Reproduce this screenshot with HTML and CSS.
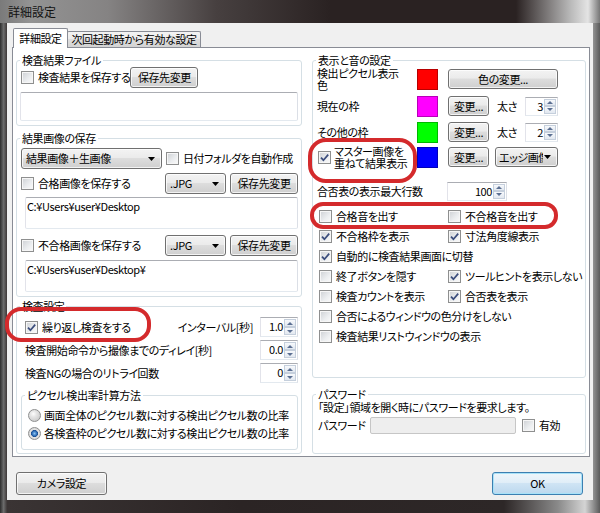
FILE: index.html
```html
<!DOCTYPE html>
<html lang="ja">
<head>
    <meta charset="UTF-8">
    <title>詳細設定</title>
    <link rel="stylesheet" href="styles.css">
</head>
<body>
<div class="window">
    <div class="titlebar">詳細設定</div>
    <div class="client">
        <div class="tabs">
            <div class="tab active">詳細設定</div>
            <div class="tab">次回起動時から有効な設定</div>
        </div>

        <div class="page">
            <!-- left column -->
            <div class="col left">
                <fieldset>
                    <legend>検査結果ファイル</legend>
                    <div class="row h21">
                        <label class="chk ml1"><span class="cb"></span>検査結果を保存する</label>
                        <span class="btn save">保存先変更</span>
                    </div>
                    <div class="tb file mt4"></div>
                </fieldset>

                <fieldset class="mt6">
                    <legend>結果画像の保存</legend>
                    <div class="row h21 mt3">
                        <span class="combo kind ml1"><span class="ctext">結果画像＋生画像</span><svg class="dd" viewBox="0 0 7 4"><path d="M0 0h7L3.5 4z"/></svg></span>
                        <label class="chk ml4"><span class="cb"></span>日付フォルダを自動作成</label>
                        <span class="grow"></span>
                    </div>
                    <div class="row h21 mt4">
                        <label class="chk ml1 grow"><span class="cb"></span>合格画像を保存する</label>
                        <span class="combo ext"><span class="ctext">.JPG</span><svg class="dd" viewBox="0 0 7 4"><path d="M0 0h7L3.5 4z"/></svg></span>
                        <span class="btn save ml4">保存先変更</span>
                    </div>
                    <div class="tb path mt3">C:¥Users¥user¥Desktop</div>
                    <div class="row h21 mt6">
                        <label class="chk ml1 grow"><span class="cb"></span>不合格画像を保存する</label>
                        <span class="combo ext"><span class="ctext">.JPG</span><svg class="dd" viewBox="0 0 7 4"><path d="M0 0h7L3.5 4z"/></svg></span>
                        <span class="btn save ml4">保存先変更</span>
                    </div>
                    <div class="tb path mt4">C:¥Users¥user¥Desktop¥</div>
                </fieldset>

                <fieldset class="mt3 inspect">
                    <legend>検査設定</legend>
                    <div class="row h20 mt4">
                        <label class="chk ml5 grow"><span class="cb"><svg class="tick" viewBox="0 0 11 11"><path d="M2 5.6l2.4 2.6L9.2 2.6"/></svg></span>繰り返し検査をする</label>
                        <span>インターバル[秒]</span>
                        <span class="spin ml7 w38"><span class="val">1.0</span><span class="arr"><span class="up"></span><span class="down"></span></span></span>
                    </div>
                    <div class="row h20 mt3">
                        <span class="ml5 grow">検査開始命令から撮像までのディレイ[秒]</span>
                        <span class="spin w38"><span class="val">0.0</span><span class="arr"><span class="up"></span><span class="down"></span></span></span>
                    </div>
                    <div class="row h20 mt3">
                        <span class="ml5 grow">検査NGの場合のリトライ回数</span>
                        <span class="spin w38"><span class="val">0</span><span class="arr"><span class="up"></span><span class="down"></span></span></span>
                    </div>

                    <fieldset class="sub mt6">
                        <legend>ピクセル検出率計算方法</legend>
                        <label class="opt mt4"><span class="rb"></span>画面全体のピクセル数に対する検出ピクセル数の比率</label>
                        <label class="opt"><span class="rb on"></span>各検査枠のピクセル数に対する検出ピクセル数の比率</label>
                    </fieldset>
                </fieldset>
            </div>

            <!-- right column -->
            <div class="col right">
                <fieldset class="display">
                    <legend>表示と音の設定</legend>
                    <div class="row h24">
                        <span class="name two">検出ピクセル表示<br>色</span>
                        <span class="swatch red"></span>
                        <span class="btn color ml10">色の変更...</span>
                    </div>
                    <div class="row h26 mt2">
                        <span class="name">現在の枠</span>
                        <span class="swatch magenta"></span>
                        <span class="btn small ml10">変更...</span>
                        <span class="ml8">太さ</span>
                        <span class="spin ml8 w33"><span class="val">3</span><span class="arr"><span class="up"></span><span class="down"></span></span></span>
                    </div>
                    <div class="row h26">
                        <span class="name">その他の枠</span>
                        <span class="swatch green"></span>
                        <span class="btn small ml10">変更...</span>
                        <span class="ml8">太さ</span>
                        <span class="spin ml8 w33"><span class="val">2</span><span class="arr"><span class="up"></span><span class="down"></span></span></span>
                    </div>
                    <div class="row h24">
                        <label class="chk name master"><span class="cb"><svg class="tick" viewBox="0 0 11 11"><path d="M2 5.6l2.4 2.6L9.2 2.6"/></svg></span><span class="two">マスター画像を<br>重ねて結果表示</span></label>
                        <span class="swatch blue"></span>
                        <span class="btn small ml10">変更...</span>
                        <span class="combo edge ml6"><span class="ctext">エッジ画像</span><svg class="dd" viewBox="0 0 7 4"><path d="M0 0h7L3.5 4z"/></svg></span>
                    </div>
                    <div class="row h20 mt12">
                        <span class="name wide">合否表の表示最大行数</span>
                        <span class="spin w60"><span class="val">100</span><span class="arr"><span class="up"></span><span class="down"></span></span></span>
                    </div>
                    <div class="checks mt5">
                        <label class="chk"><span class="cb"></span>合格音を出す</label>
                        <label class="chk"><span class="cb"></span>不合格音を出す</label>
                        <label class="chk"><span class="cb"><svg class="tick" viewBox="0 0 11 11"><path d="M2 5.6l2.4 2.6L9.2 2.6"/></svg></span>不合格枠を表示</label>
                        <label class="chk"><span class="cb"><svg class="tick" viewBox="0 0 11 11"><path d="M2 5.6l2.4 2.6L9.2 2.6"/></svg></span>寸法角度線表示</label>
                        <label class="chk full"><span class="cb"><svg class="tick" viewBox="0 0 11 11"><path d="M2 5.6l2.4 2.6L9.2 2.6"/></svg></span>自動的に検査結果画面に切替</label>
                        <label class="chk"><span class="cb"></span>終了ボタンを隠す</label>
                        <label class="chk"><span class="cb"><svg class="tick" viewBox="0 0 11 11"><path d="M2 5.6l2.4 2.6L9.2 2.6"/></svg></span>ツールヒントを表示しない</label>
                        <label class="chk"><span class="cb"></span>検査カウントを表示</label>
                        <label class="chk"><span class="cb"><svg class="tick" viewBox="0 0 11 11"><path d="M2 5.6l2.4 2.6L9.2 2.6"/></svg></span>合否表を表示</label>
                        <label class="chk full"><span class="cb"></span>合否によるウィンドウの色分けをしない</label>
                        <label class="chk full"><span class="cb"></span>検査結果リストウィンドウの表示</label>
                    </div>
                </fieldset>

                <fieldset class="password mt10">
                    <legend>パスワード</legend>
                    <div class="note">「設定」領域を開く時にパスワードを要求します。</div>
                    <div class="row h18 mt2">
                        <span class="pwlabel">パスワード</span>
                        <span class="tb pw"></span>
                        <label class="chk ml6"><span class="cb"></span>有効</label>
                    </div>
                </fieldset>
            </div>
        </div>

        <div class="footer">
            <span class="btn big">カメラ設定</span>
            <span class="btn big ok">OK</span>
        </div>
    </div>

    <!-- annotation marks drawn over the screenshot -->
    <div class="mark m1"></div>
    <div class="mark m2"></div>
    <div class="mark m3"></div>
</div>
</body>
</html>
```

FILE: styles.css
```css
* {
    box-sizing: border-box;
}
body {
    margin: 0;
    font-family: "Noto Sans CJK JP", "Noto Sans", sans-serif;
    font-size: 11px;
    line-height: 13px;
    letter-spacing: -0.4px;
    color: #000;
    font-feature-settings: "palt" 1;
    background: #fff;
}
.window {
    position: relative;
    width: 600px;
    height: 513px;
    overflow: hidden;
    display: flex;
    flex-direction: column;
    background: linear-gradient(90deg, #2c2c2c 0%, #6c6c6c 0.6%, #3a3434 1.2%, #2b2424 40%, #2d2727 84%, #8a8a8a 93%, #d4d4d4 97.5%, #5a5a5a 100%);
}
.titlebar {
    height: 23px;
    padding-left: 8px;
    font-size: 12px;
    line-height: 24px;
    letter-spacing: 0;
    color: #111;
    background: linear-gradient(90deg, #7a7a7a 0%, #939393 5%, #858383 18%, #474040 36%, #2a2222 55%, #2a2222 86%, #b8b8b8 95%, #e4e4e4 98%, #767676 100%);
}
.client {
    height: 477px;
    margin: 0 7px;
    padding: 5px 3px 0 5px;
    background: #f0f0f0;
}

/* tabs */
.tabs {
    display: flex;
    align-items: flex-end;
    height: 19px;
    padding-left: 1px;
}
.tab {
    height: 16px;
    width: 134px;
    margin-left: -1px;
    border: 1px solid #898c95;
    border-bottom: none;
    border-radius: 2px 2px 0 0;
    text-align: center;
    line-height: 15px;
    white-space: nowrap;
    background: linear-gradient(#f3f3f3, #ebebeb 50%, #dedede 50%, #d3d3d3);
}
.tab.active {
    height: 20px;
    width: 55px;
    margin-left: 0;
    margin-bottom: -1px;
    position: relative;
    z-index: 1;
    line-height: 19px;
    background: #fff;
}
.page {
    height: 410px;
    display: flex;
    gap: 10px;
    padding: 6px 3px 0 3px;
    border: 1px solid #898c95;
    background: #fff;
}
.col {
    display: flex;
    flex-direction: column;
}
.left {
    width: 286px;
}
.right {
    width: 274px;
}

/* group boxes */
fieldset {
    margin: 0;
    min-width: 0;
    padding: 0 3px 4px 3px;
    border: 1px solid #d5dfe5;
    border-radius: 3px;
}
legend {
    padding: 0 2px;
    line-height: 13px;
}
.inspect {
    padding-bottom: 3px;
}
.sub {
    margin-left: 1px;
    padding-bottom: 7px;
}
.display {
    padding-bottom: 31px;
}
.password {
    padding-bottom: 19px;
}

.row {
    display: flex;
    align-items: center;
    white-space: nowrap;
}
.h18 { height: 18px; }
.h20 { height: 20px; }
.h21 { height: 21px; }
.h24 { height: 24px; }
.h26 { height: 26px; }
.grow { flex: 1; }
.mt2 { margin-top: 2px; }
.mt3 { margin-top: 3px; }
.mt4 { margin-top: 4px; }
.mt5 { margin-top: 5px; }
.mt6 { margin-top: 6px; }
.mt10 { margin-top: 10px; }
.mt12 { margin-top: 12px; }
.ml1 { margin-left: 1px; }
.ml4 { margin-left: 4px; }
.ml5 { margin-left: 5px; }
.ml6 { margin-left: 6px; }
.ml7 { margin-left: 7px; }
.ml8 { margin-left: 8px; }
.ml10 { margin-left: 10px; }

/* controls */
.btn, .combo {
    display: flex;
    align-items: center;
    height: 21px;
    border: 1px solid #707070;
    border-radius: 3px;
    background: linear-gradient(#f3f3f3 0%, #ebebeb 45%, #dddddd 50%, #cfcfcf 100%);
    box-shadow: inset 0 0 0 1px rgba(255, 255, 255, 0.75);
    white-space: nowrap;
}
.btn {
    justify-content: center;
}
.save { width: 68px; }
.color { width: 110px; height: 20px; }
.small { width: 41px; height: 20px; }
.big { width: 91px; height: 23px; }
.ok {
    border-color: #3c7fb1;
    background: linear-gradient(#eef6fb 0%, #e1eef8 45%, #cfe4f4 50%, #bcd8ee 100%);
    box-shadow: inset 0 0 0 1px #a8e2f8;
}
.combo {
    justify-content: space-between;
    padding: 0 6px 0 4px;
}
.kind { width: 141px; }
.ext { width: 61px; }
.edge { width: 63px; height: 20px; padding-left: 3px; overflow: hidden; }
.edge .ctext {
    width: 44px;
    flex: none;
    overflow: hidden;
    line-height: 16px;
}
.dd {
    width: 7px;
    height: 4px;
    flex: none;
}
.dd path {
    fill: #000;
}

.tb {
    border: 1px solid;
    border-color: #abadb3 #dbdfe6 #e3e9ef #e2e3ea;
    border-radius: 2px;
    background: #fff;
    padding: 2px 1px;
    white-space: nowrap;
}
.file { height: 29px; }
.path { height: 32px; margin-left: 5px; }
.pw {
    width: 146px;
    height: 17px;
    border-color: #c6c6c6;
    background: #eeeeee;
}

.spin {
    display: flex;
    height: 20px;
    border: 1px solid;
    border-color: #abadb3 #dbdfe6 #e3e9ef #e2e3ea;
    background: #fff;
}
.w33 { width: 33px; height: 19px; }
.w38 { width: 38px; }
.w60 { width: 60px; height: 19px; }
.spin .val {
    flex: 1;
    text-align: right;
    padding-right: 1px;
    line-height: 17px;
}
.arr {
    width: 13px;
    display: flex;
    flex-direction: column;
    padding: 1px 1px 1px 0;
}
.arr span {
    flex: 1;
    display: flex;
    align-items: center;
    justify-content: center;
    border: 1px solid #c5cfdc;
    background: linear-gradient(#f7f9fc, #e2e8f0);
}
.arr .up::before {
    content: "";
    border: 3px solid transparent;
    border-top: none;
    border-bottom: 3px solid #5b6f92;
}
.arr .down::before {
    content: "";
    border: 3px solid transparent;
    border-bottom: none;
    border-top: 3px solid #5b6f92;
}

.chk, .opt {
    display: flex;
    align-items: center;
    gap: 4px;
    white-space: nowrap;
}
.cb {
    width: 13px;
    height: 13px;
    flex: none;
    display: flex;
    align-items: center;
    justify-content: center;
    border: 1px solid #8e8f8f;
    background: linear-gradient(135deg, #cdd0d4 0%, #eceef0 60%, #fafafa 100%);
    box-shadow: inset 0 0 0 1px #f6f6f6;
}
.tick {
    width: 11px;
    height: 11px;
}
.tick path {
    fill: none;
    stroke: #3b4d7c;
    stroke-width: 1.7;
}
.opt {
    height: 18px;
    padding-left: 3px;
    gap: 3px;
}
.rb {
    width: 13px;
    height: 13px;
    flex: none;
    border-radius: 50%;
    border: 1px solid #8e8f8f;
    background: radial-gradient(circle at 40% 35%, #fdfdfd 0, #e6e6e6 3px, #cfcfcf 7px);
}
.rb.on {
    background: radial-gradient(circle at 50% 50%, #8fc3ef 0, #3a7cc4 2px, #1d4f93 3.2px, #e4e4e4 3.8px, #d0d0d0 7px);
}

/* display settings */
.name {
    width: 101px;
    padding-left: 1px;
    flex: none;
}
.name.wide {
    width: 131px;
}
.two {
    line-height: 12px;
}
.master {
    padding-left: 2px;
    gap: 3px;
}
.swatch {
    width: 21px;
    height: 21px;
    flex: none;
    border: 1px solid rgba(0, 0, 0, 0.28);
}
.red { background: #ff0000; }
.magenta { background: #ff00ff; }
.green { background: #00ff00; }
.blue { background: #0000ff; }
.checks {
    display: grid;
    grid-template-columns: 129px 1fr;
    grid-auto-rows: 20px;
    padding-left: 3px;
}
.checks .full {
    grid-column: 1 / 3;
}

.note {
    padding-left: 2px;
    white-space: nowrap;
}
.pwlabel {
    width: 54px;
    padding-left: 2px;
}

.footer {
    display: flex;
    justify-content: space-between;
    padding: 15px 7px 0 4px;
}

/* red annotation marks */
.mark {
    position: absolute;
    border: 4px solid #d42a2c;
    border-radius: 16px;
}
.m1 {
    left: 5px;
    top: 307px;
    width: 146px;
    height: 35px;
}
.m2 {
    left: 308px;
    top: 138px;
    width: 109px;
    height: 45px;
    border-radius: 18px;
}
.m3 {
    left: 310px;
    top: 202px;
    width: 248px;
    height: 27px;
    border-radius: 13px;
}
```
